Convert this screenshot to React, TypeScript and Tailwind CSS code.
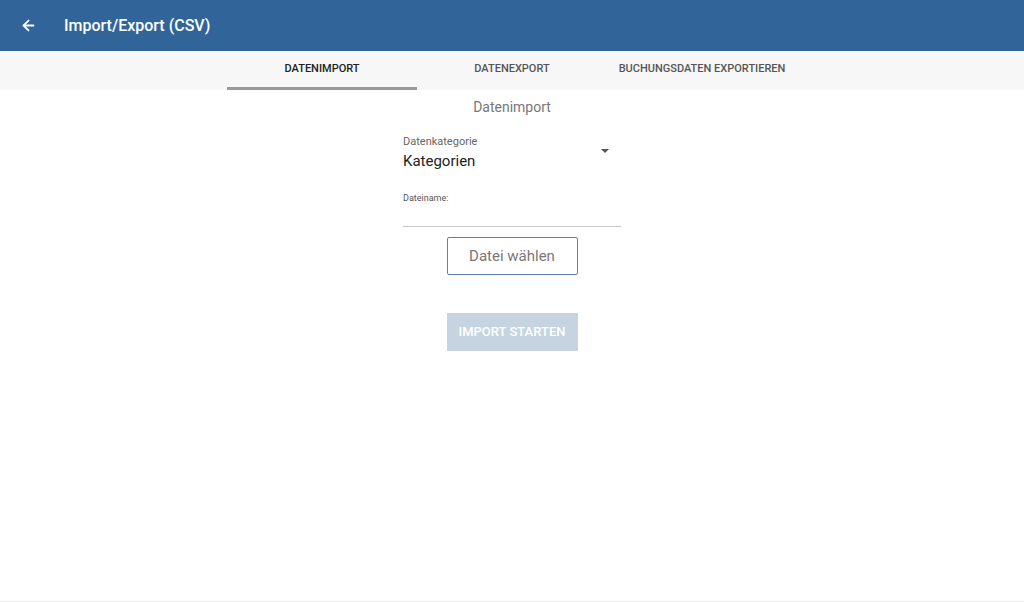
import { ArrowLeft } from "lucide-react";

const tabs = ["Datenimport", "Datenexport", "Buchungsdaten exportieren"];

export default function App() {
  return (
    <div className="flex h-[602px] w-full flex-col bg-white font-['Roboto',sans-serif]">
      {/* App bar */}
      <header className="flex h-[51px] shrink-0 items-center bg-[#31659a] shadow-[0_1px_2px_rgba(0,0,0,0.3)]">
        <ArrowLeft className="ml-[20px] h-[17px] w-[17px] text-white" strokeWidth={2.5} />
        <h1 className="ml-[27px] text-[16px] font-medium text-white">Import/Export (CSV)</h1>
      </header>

      {/* Tabs */}
      <nav className="flex h-[39px] shrink-0 justify-center bg-[#f7f7f7]">
        {tabs.map((t, i) => (
          <div
            key={t}
            className={
              "flex w-[190px] items-center justify-center border-b-[3px] pt-[1px] text-[11px] font-medium uppercase " +
              (i === 0 ? "border-[#9a9a9a] text-[#222]" : "border-transparent text-[#555]")
            }
          >
            {t}
          </div>
        ))}
      </nav>

      {/* Content */}
      <main className="flex flex-1 flex-col items-center border-b border-[#eee]">
        <h2 className="mt-[7px] text-[14px] text-[#777]">Datenimport</h2>

        <div className="mt-[17px] w-[218px]">
          <div className="relative">
            <p className="text-[11px] leading-[14px] text-[#666]">Datenkategorie</p>
            <p className="mt-[2px] text-[15px] leading-[20px] text-[#222]">Kategorien</p>
            <span className="absolute right-[12px] top-[14px] h-0 w-0 border-x-[4px] border-t-[4px] border-x-transparent border-t-[#555]" />
          </div>

          <p className="mt-[21px] text-[9px] leading-[12px] text-[#555]">Dateiname:</p>
          <div className="mt-[22px] border-b border-[#c8c8c8]" />
        </div>

        <button className="mt-[10px] h-[38px] w-[131px] rounded-[2px] border border-[#5b80a9] text-[15px] text-[#777]">
          Datei wählen
        </button>

        <button className="mt-[38px] h-[38px] w-[131px] bg-[#c6d4e2] text-[13px] font-medium uppercase text-white">
          Import starten
        </button>
      </main>
    </div>
  );
}
